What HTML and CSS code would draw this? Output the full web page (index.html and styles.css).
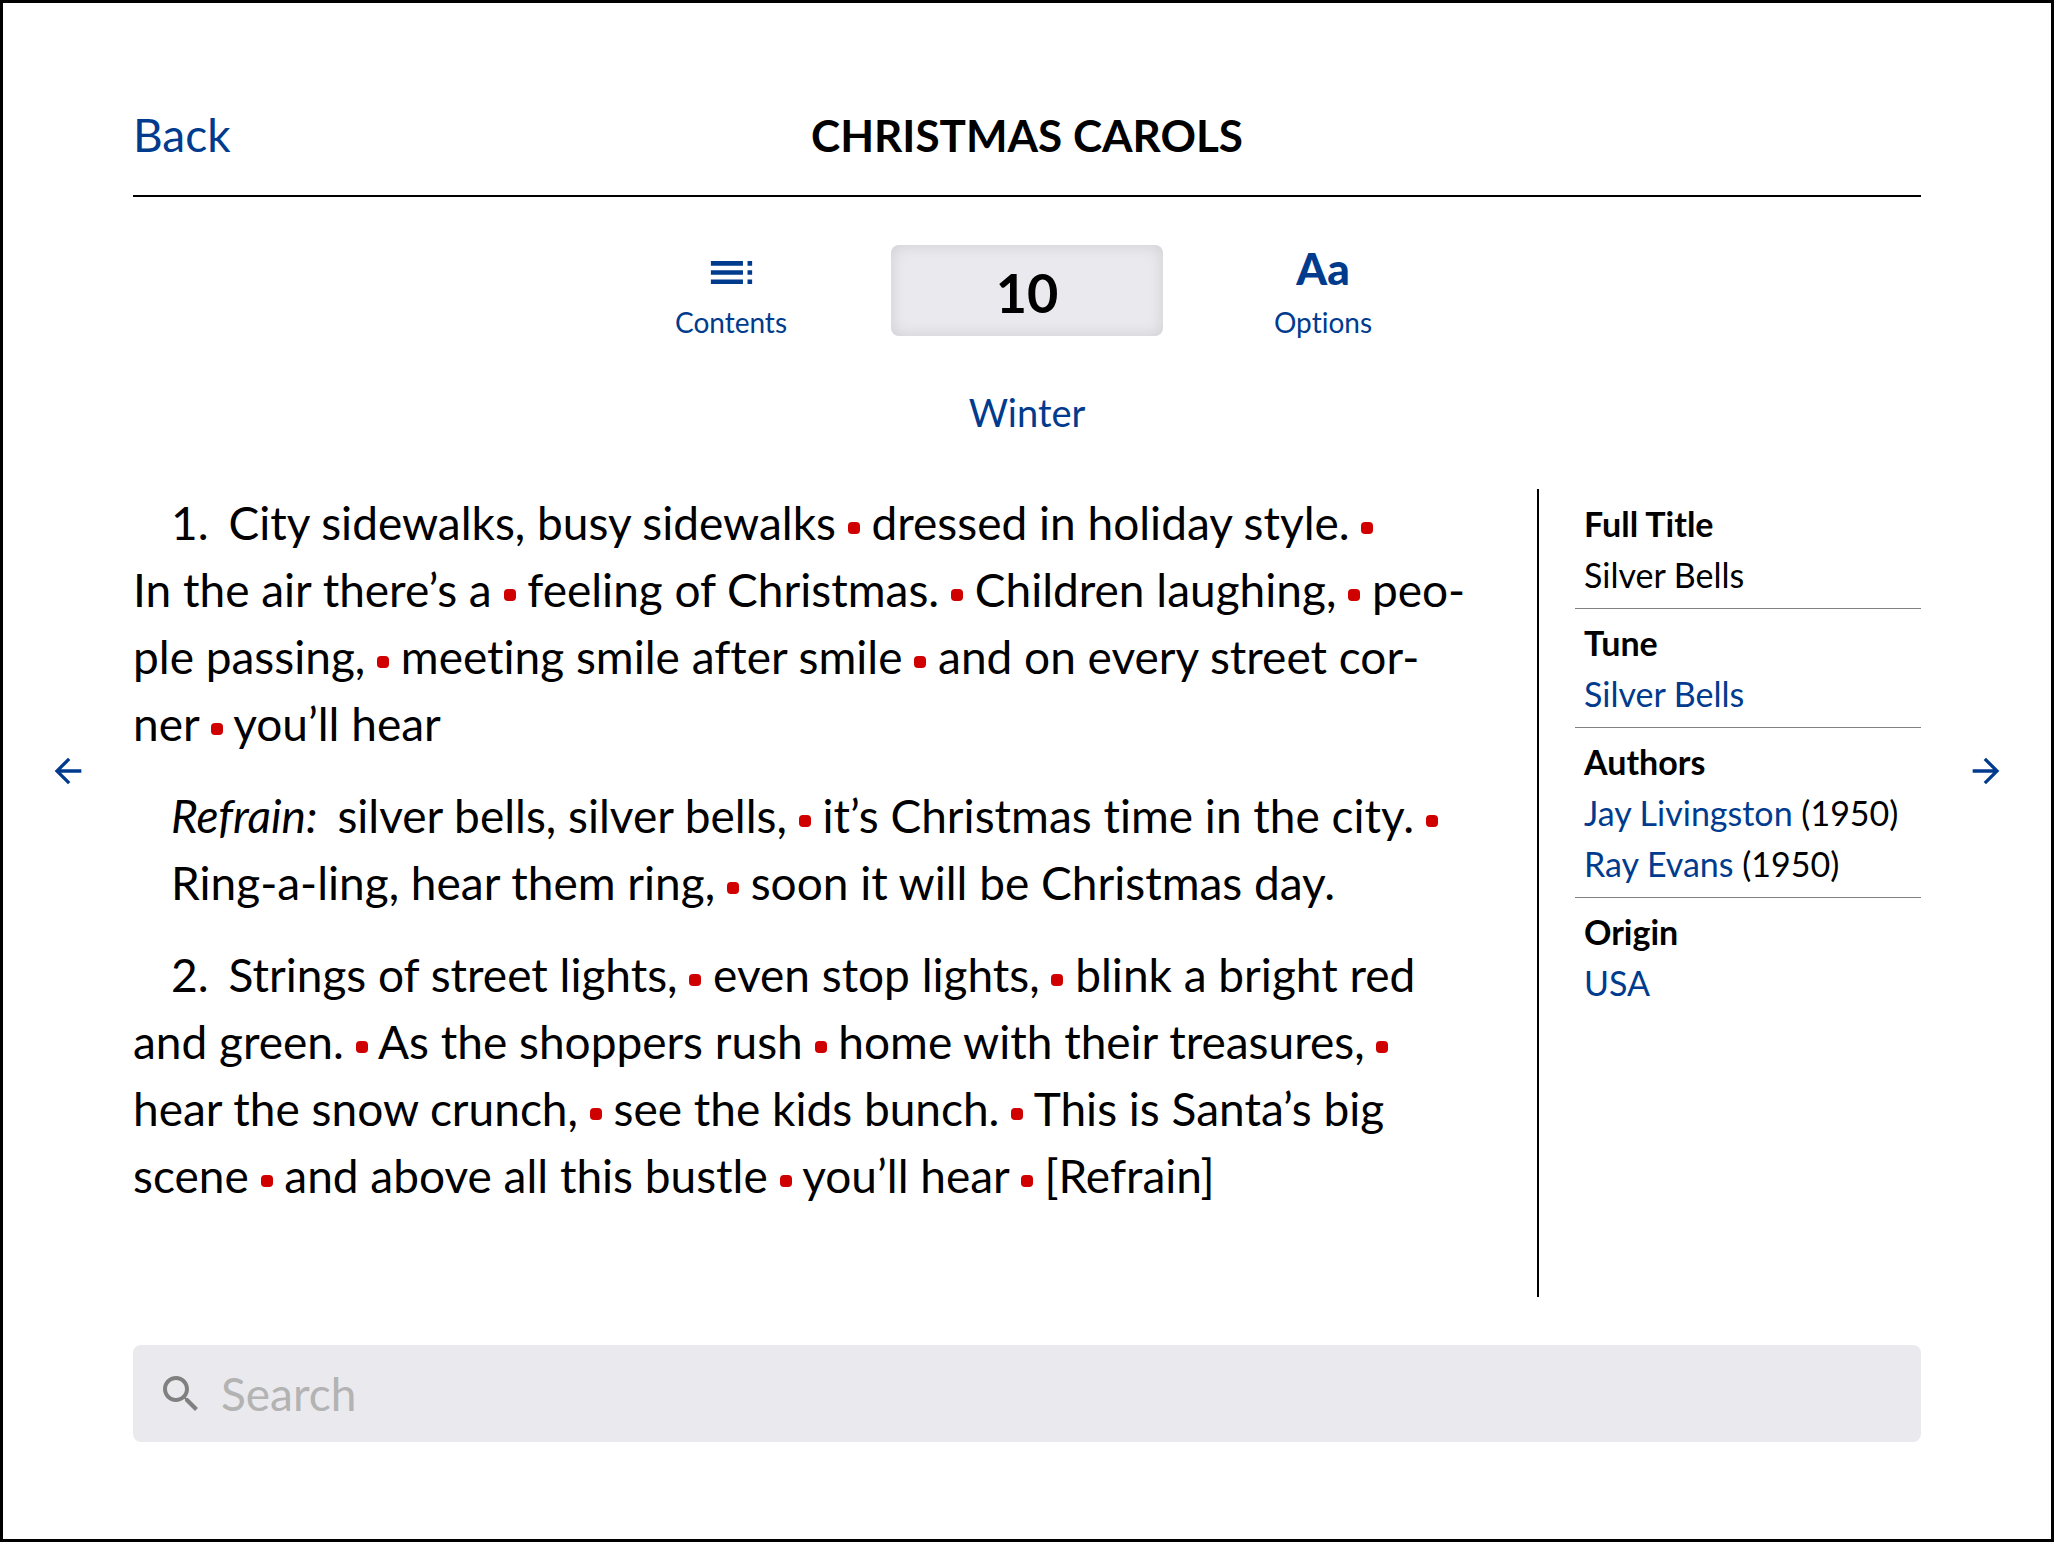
FILE: index.html
```html
<!DOCTYPE html>
<html lang="en">
<head>
<meta charset="utf-8">
<meta name="viewport" content="width=device-width, initial-scale=1">
<title>Christmas Carols – 10</title>
<link rel="stylesheet" href="styles.css">
</head>
<body>
<div class="frame">
  <button class="pager" type="button" aria-label="Previous song">
    <svg class="pager-icon" viewBox="0 0 24 24" aria-hidden="true"><path d="M20 11H7.83l5.59-5.59L12 4l-8 8 8 8 1.41-1.41L7.83 13H20v-2z"/></svg>
  </button>

  <div class="page">
    <header class="header">
      <a class="back" href="#">Back</a>
      <h1 class="title">CHRISTMAS CAROLS</h1>
    </header>

    <div class="toolbar">
      <button class="tool" type="button">
        <svg class="tool-icon" viewBox="0 0 24 24" aria-hidden="true"><path d="M3 9h14V7H3v2zm0 4h14v-2H3v2zm0 4h14v-2H3v2zm16 0h2v-2h-2v2zm0-10v2h2V7h-2zm0 6h2v-2h-2v2z"/></svg>
        <span class="tool-label">Contents</span>
      </button>
      <input class="number" type="text" inputmode="numeric" value="10" aria-label="Song number">
      <button class="tool" type="button">
        <span class="tool-glyph">Aa</span>
        <span class="tool-label">Options</span>
      </button>
    </div>

    <a class="topic" href="#">Winter</a>

    <main class="content">
      <article class="lyrics">
        <p class="verse"><span class="verse-label">1.</span>City sidewalks, busy sidewalks <i class="dot"></i> dressed in holiday style. <i class="dot"></i><br>
        In the air there’s a <i class="dot"></i> feeling of Christmas. <i class="dot"></i> Children laughing, <i class="dot"></i> peo-<br>
        ple passing, <i class="dot"></i> meeting smile after smile <i class="dot"></i> and on every street cor-<br>
        ner <i class="dot"></i> you’ll hear</p>
        <p class="refrain"><em class="verse-label">Refrain:</em>silver bells, silver bells, <i class="dot"></i> it’s Christmas time in the city. <i class="dot"></i><br>
        Ring-a-ling, hear them ring, <i class="dot"></i> soon it will be Christmas day.</p>
        <p class="verse"><span class="verse-label">2.</span>Strings of street lights, <i class="dot"></i> even stop lights, <i class="dot"></i> blink a bright red<br>
        and green. <i class="dot"></i> As the shoppers rush <i class="dot"></i> home with their treasures, <i class="dot"></i><br>
        hear the snow crunch, <i class="dot"></i> see the kids bunch. <i class="dot"></i> This is Santa’s big<br>
        scene <i class="dot"></i> and above all this bustle <i class="dot"></i> you’ll hear <i class="dot"></i> [Refrain]</p>
      </article>

      <aside class="details">
        <section class="detail">
          <h2 class="detail-name">Full Title</h2>
          <p>Silver Bells</p>
        </section>
        <section class="detail">
          <h2 class="detail-name">Tune</h2>
          <p><a href="#">Silver Bells</a></p>
        </section>
        <section class="detail">
          <h2 class="detail-name">Authors</h2>
          <p><a href="#">Jay Livingston</a> (1950)</p>
          <p><a href="#">Ray Evans</a> (1950)</p>
        </section>
        <section class="detail">
          <h2 class="detail-name">Origin</h2>
          <p><a href="#">USA</a></p>
        </section>
      </aside>
    </main>

    <label class="search">
      <svg class="search-icon" viewBox="0 0 24 24" aria-hidden="true"><path d="M15.5 14h-.79l-.28-.27C15.41 12.59 16 11.11 16 9.5 16 5.91 13.09 3 9.5 3S3 5.91 3 9.5 5.91 16 9.5 16c1.61 0 3.09-.59 4.23-1.57l.27.28v.79l5 4.99L20.49 19l-4.99-5zm-6 0C7.01 14 5 11.99 5 9.5S7.01 5 9.5 5 14 7.01 14 9.5 11.99 14 9.5 14z"/></svg>
      <input class="search-input" type="text" placeholder="Search" aria-label="Search">
    </label>
  </div>

  <button class="pager" type="button" aria-label="Next song">
    <svg class="pager-icon" viewBox="0 0 24 24" aria-hidden="true"><path d="M12 4l-1.41 1.41L16.17 11H4v2h12.17l-5.58 5.59L12 20l8-8z"/></svg>
  </button>
</div>
</body>
</html>
```
FILE: styles.css
```css
:root {
  --link: #003b8e;
  --field: #eae9ee;
  --dot: #d00000;
}

* {
  box-sizing: border-box;
}

body,
h1,
h2,
p {
  margin: 0;
}

body {
  font-family: Lato, "Open Sans", sans-serif;
  font-size: 46px;
  font-variant-ligatures: none;
  line-height: 67px;
  color: #000;
  background: #fff;
}

a {
  color: var(--link);
  text-decoration: none;
}

button,
input {
  margin: 0;
  padding: 0;
  border: 0;
  background: none;
  font: inherit;
  font-variant-ligatures: none;
  color: inherit;
}

svg {
  display: block;
  fill: currentColor;
}

.frame {
  display: grid;
  grid-template-columns: 130px minmax(0, 1fr) 130px;
  min-height: 100vh;
  border: 3px solid #000;
}

.pager {
  display: flex;
  align-items: center;
  justify-content: center;
  color: var(--link);
}

.pager-icon {
  width: 40px;
  height: 40px;
}

.page {
  display: flex;
  flex-direction: column;
  padding: 98px 0 97px;
}

.header {
  display: grid;
  grid-template-columns: 1fr auto 1fr;
  align-items: baseline;
  padding-bottom: 26px;
  border-bottom: 2px solid #000;
}

.title {
  font-size: 44px;
  font-weight: 700;
}

.toolbar {
  display: flex;
  justify-content: center;
  gap: 64px;
  margin-top: 48px;
}

.tool {
  display: flex;
  flex-direction: column;
  align-items: center;
  width: 192px;
  color: var(--link);
}

.tool-icon {
  width: 55px;
  height: 55px;
}

.tool-glyph {
  padding-bottom: 8px;
  font-size: 44px;
  font-weight: 900;
  line-height: 47px;
}

.tool-label {
  font-size: 28px;
  line-height: 44px;
}

.number {
  width: 272px;
  height: 91px;
  padding-top: 4px;
  border-radius: 8px;
  background: var(--field);
  box-shadow: inset 0 0 16px rgba(0, 0, 0, 0.12);
  font-size: 54px;
  font-weight: 700;
  text-align: center;
}

.topic {
  align-self: center;
  margin: 40px 0 49px;
  font-size: 38px;
  line-height: 56px;
}

.content {
  display: flex;
  flex: 1;
}

.lyrics {
  display: flex;
  flex: 1;
  flex-direction: column;
  gap: 25px;
}

.verse {
  text-indent: 38px;
}

.refrain {
  padding-left: 38px;
}

.verse-label {
  margin-right: 20px;
}

.dot {
  display: inline-block;
  width: 12px;
  height: 12px;
  border-radius: 4px;
  background: var(--dot);
  vertical-align: 6px;
}

.details {
  width: 384px;
  padding: 9px 0 0 36px;
  border-left: 2px solid #000;
  font-size: 34px;
  line-height: 51px;
}

.detail {
  padding: 8px 0 8px 9px;
  border-bottom: 1px solid #808080;
}

.detail:first-child {
  padding-top: 0;
}

.detail:last-child {
  border-bottom: 0;
}

.detail-name {
  font-size: 34px;
  font-weight: 700;
}

.search {
  display: flex;
  align-items: center;
  gap: 16px;
  height: 97px;
  margin-top: 48px;
  padding: 0 24px;
  border-radius: 8px;
  background: var(--field);
}

.search-icon {
  width: 48px;
  height: 48px;
  color: #808080;
}

.search-input {
  flex: 1;
  min-width: 0;
  height: 67px;
}

.search-input::placeholder {
  color: #b3b3b3;
  opacity: 1;
}
```
